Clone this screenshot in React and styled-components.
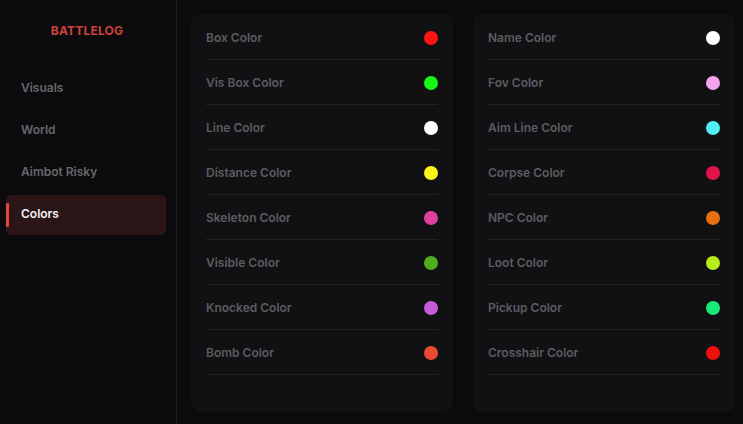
import React, { useState } from 'react'
import styled, { createGlobalStyle } from 'styled-components'

const Global = createGlobalStyle`
  html, body { margin: 0; padding: 0; background: #0b0b0d; }
  body { font-family: Inter, "Noto Sans", sans-serif; }
  * { box-sizing: border-box; }
`

const Shell = styled.div`
  display: flex;
  width: 743px;
  height: 424px;
  background: #0b0b0d;
  overflow: hidden;
`

const Sidebar = styled.aside`
  width: 177px;
  flex-shrink: 0;
  border-right: 1px solid #1c1c1f;
  padding: 0 10px 0 6px;
  display: flex;
  flex-direction: column;
`

const Brand = styled.div`
  height: 60px;
  display: flex;
  align-items: center;
  justify-content: center;
  color: #cf413b;
  font-size: 12px;
  font-weight: 700;
  letter-spacing: 0.2px;
  padding-left: 2px;
`

const Nav = styled.nav`
  display: flex;
  flex-direction: column;
  gap: 2px;
  margin-top: 9px;
`

const NavItem = styled.div`
  position: relative;
  height: 40px;
  display: flex;
  align-items: center;
  padding: 0 15px 4px;
  border-radius: 5px;
  font-size: 12px;
  font-weight: 600;
  color: ${p => (p.$active ? '#f2f2f2' : '#67676c')};
  background: ${p => (p.$active ? '#2b1517' : 'transparent')};
  cursor: pointer;

  &::before {
    content: '';
    display: ${p => (p.$active ? 'block' : 'none')};
    position: absolute;
    left: 0;
    top: 8px;
    bottom: 8px;
    width: 3px;
    border-radius: 1px;
    background: #e2463f;
  }
`

const Main = styled.main`
  flex: 1;
  display: grid;
  grid-template-columns: 262px 262px;
  gap: 20px;
  padding: 14px 8px 12px 14px;
`

const Card = styled.section`
  background: #111113;
  border-radius: 10px;
  padding: 1px 15px 0;
`

const Row = styled.div`
  height: 45px;
  display: flex;
  align-items: center;
  justify-content: space-between;
  border-bottom: 1px solid #222225;
  padding-top: 1px;
`

const Label = styled.span`
  font-size: 12px;
  font-weight: 600;
  color: #5c5c61;
`

const Swatch = styled.span`
  width: 14px;
  height: 14px;
  border-radius: 50%;
  background: ${p => p.$color};
`

const left = [
  ['Box Color', '#ff1414'],
  ['Vis Box Color', '#17f516'],
  ['Line Color', '#ffffff'],
  ['Distance Color', '#fcf51a'],
  ['Skeleton Color', '#e0409d'],
  ['Visible Color', '#4fad1b'],
  ['Knocked Color', '#c65ad9'],
  ['Bomb Color', '#e9492f'],
]

const right = [
  ['Name Color', '#ffffff'],
  ['Fov Color', '#f5a3ec'],
  ['Aim Line Color', '#4df2f0'],
  ['Corpse Color', '#e0134a'],
  ['NPC Color', '#e86f12'],
  ['Loot Color', '#b7eb1a'],
  ['Pickup Color', '#19e878'],
  ['Crosshair Color', '#f01010'],
]

const tabs = ['Visuals', 'World', 'Aimbot Risky', 'Colors']

export default function App() {
  const [tab, setTab] = useState('Colors')

  return (
    <Shell>
      <Global />
      <Sidebar>
        <Brand>BATTLELOG</Brand>
        <Nav>
          {tabs.map(t => (
            <NavItem key={t} $active={t === tab} onClick={() => setTab(t)}>
              {t}
            </NavItem>
          ))}
        </Nav>
      </Sidebar>
      <Main>
        {[left, right].map((list, i) => (
          <Card key={i}>
            {list.map(([name, color]) => (
              <Row key={name}>
                <Label>{name}</Label>
                <Swatch $color={color} />
              </Row>
            ))}
          </Card>
        ))}
      </Main>
    </Shell>
  )
}
